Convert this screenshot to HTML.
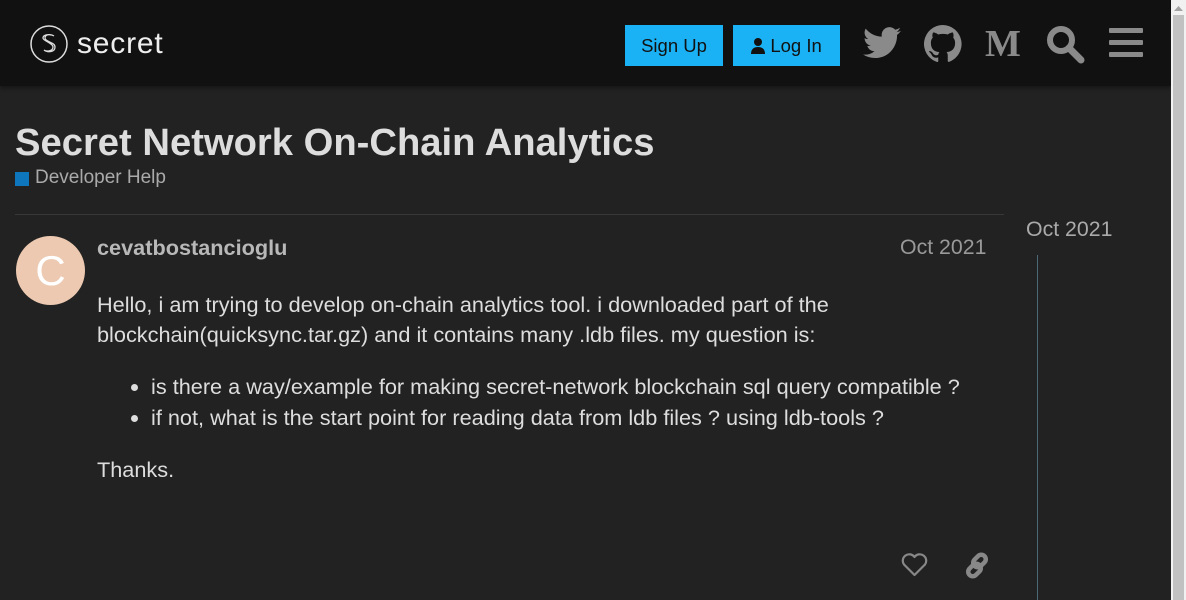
<!DOCTYPE html>
<html><head><style>
*{margin:0;padding:0;box-sizing:border-box}
body{width:1186px;height:600px;overflow:hidden;background:#222;font-family:"Liberation Sans",sans-serif;position:relative}
.hdr{position:absolute;left:0;top:0;width:1171px;height:86px;background:#111;box-shadow:0 2px 4px rgba(0,0,0,.4)}
.abs{position:absolute}
.btn{position:absolute;top:25px;height:41px;background:#1ab2f5;color:#111;font-size:18.5px;line-height:41px;text-align:center}
.ic{position:absolute;fill:#8a8a8a}
.sb{position:absolute;left:1171px;top:0;width:15px;height:600px;background:#f1f1f1}
.th{position:absolute;left:1173px;top:15px;width:11px;height:585px;background:#c1c1c1}
</style></head><body>
<div class="hdr">
<svg class="abs" style="left:29px;top:24px" width="40" height="40" viewBox="0 0 40 40"><circle cx="20" cy="20" r="18" fill="none" stroke="#ddd" stroke-width="1.5"/><path d="M25 12c-3-2-9-2-9 2s10 4 10 9-7 6-11 3M22 11c-3-1-8 0-8 3s10 5 10 9-6 5-9 3" fill="none" stroke="#ddd" stroke-width="1.3"/></svg>
<div class="abs" style="left:77px;top:27px;color:#eee;font-size:30px;letter-spacing:0.8px">secret</div>
<div class="btn" style="left:625px;width:98px">Sign Up</div>
<div class="btn" style="left:733px;width:107px"><svg width="14" height="16" viewBox="0 0 14 16" style="vertical-align:-2px"><circle cx="7" cy="4" r="4" fill="#111"/><path d="M0 16c0-5 3-7 7-7s7 2 7 7z" fill="#111"/></svg> Log In</div>
<svg class="ic" style="left:863px;top:27px" width="38" height="32" viewBox="0 0 24 20"><path d="M24 2.3c-.9.4-1.8.7-2.8.8 1-.6 1.8-1.6 2.2-2.7-1 .6-2 1-3.1 1.2A4.9 4.9 0 0 0 11.9 6 14 14 0 0 1 1.7.9a4.9 4.9 0 0 0 1.5 6.6c-.8 0-1.6-.2-2.2-.6 0 2.4 1.7 4.4 3.9 4.8-.7.2-1.5.2-2.2.1.6 2 2.4 3.4 4.6 3.4A9.9 9.9 0 0 1 0 17.3 14 14 0 0 0 7.5 19.5c9.1 0 14-7.5 14-14v-.6c1-.7 1.8-1.6 2.5-2.6z"/></svg>
<svg class="ic" style="left:924px;top:25px" width="38" height="38" viewBox="0 0 16 16"><path d="M8 0a8 8 0 0 0-2.5 15.6c.4 0 .5-.2.5-.4v-1.5c-2.2.5-2.7-1-2.7-1-.4-.9-.9-1.2-.9-1.2-.7-.5.1-.5.1-.5.8.1 1.2.8 1.2.8.7 1.3 1.9.9 2.3.7.1-.5.3-.9.5-1.1-1.8-.2-3.600-.9-3.600-4 0-.9.3-1.6.8-2.1-.1-.2-.4-1 .1-2.1 0 0 .7-.2 2.2.8a7.600 7.600 0 0 1 4 0c1.5-1 2.2-.8 2.2-.8.4 1.100.2 1.900.1 2.100.5.600.8 1.300.8 2.100 0 3.100-1.900 3.800-3.600 4 .3.300.5.800.5 1.500v2.200c0 .2.100.5.600.4A8 8 0 0 0 8 0z"/></svg>
<div class="abs" style="left:985px;top:22px;color:#8a8a8a;font:bold 38px 'Liberation Serif',serif">M</div>
<svg class="ic" style="left:1045px;top:24px" width="40" height="40" viewBox="0 0 40 40"><circle cx="16" cy="16" r="11" fill="none" stroke="#8a8a8a" stroke-width="6"/><path d="M24 24l12 12" stroke="#8a8a8a" stroke-width="7" stroke-linecap="round"/></svg>
<svg class="ic" style="left:1109px;top:27px" width="34" height="32"><rect y="1" width="34" height="5" rx="1"/><rect y="13" width="34" height="5" rx="1"/><rect y="25" width="34" height="5" rx="1"/></svg>
</div>
<div class="abs" style="left:15px;top:121px;color:#ddd;font-size:38.2px;font-weight:bold">Secret Network On-Chain Analytics</div>
<div class="abs" style="left:15px;top:172px;width:14px;height:14px;background:#0e76bd"></div>
<div class="abs" style="left:35px;top:167px;color:#aaa;font-size:19px">Developer Help</div>
<div class="abs" style="left:15px;top:214px;width:989px;height:1px;background:#383838"></div>
<div class="abs" style="left:16px;top:236px;width:69px;height:69px;border-radius:50%;background:#ecc9b0;color:#fff;font-size:42px;text-align:center;line-height:69px">C</div>
<div class="abs" style="left:97px;top:235px;color:#b8b8b8;font-size:21.7px;font-weight:bold">cevatbostancioglu</div>
<div class="abs" style="left:900px;top:235px;color:#999;font-size:21.3px">Oct 2021</div>
<div class="abs" style="left:97px;top:290px;color:#ddd;font-size:21.7px;line-height:30px;width:890px">Hello, i am trying to develop on-chain analytics tool. i downloaded part of the blockchain(quicksync.tar.gz) and it contains many .ldb files. my question is:</div>
<ul class="abs" style="left:151px;top:371px;color:#ddd;font-size:21.7px;line-height:31px">
<li>is there a way/example for making secret-network blockchain sql query compatible ?</li>
<li>if not, what is the start point for reading data from ldb files ? using ldb-tools ?</li></ul>
<div class="abs" style="left:97px;top:457px;color:#ddd;font-size:21.7px">Thanks.</div>
<svg class="abs" style="left:901px;top:553px" width="27" height="24" viewBox="0 0 27 24"><path d="M13.5 22L3 11.5A5.5 5.5 0 0 1 13.5 4a5.5 5.5 0 0 1 10.5 7.5z" fill="none" stroke="#888" stroke-width="2.2" stroke-linejoin="round"/></svg>
<svg class="abs" style="left:964px;top:552px" width="27" height="27" viewBox="0 0 27 27"><g fill="none" stroke="#888" stroke-width="4.5"><rect x="11" y="2" width="9" height="14" rx="4.5" transform="rotate(45 15.5 9)"/><rect x="6" y="11" width="9" height="14" rx="4.5" transform="rotate(45 10.5 18)"/></g></svg>
<div class="abs" style="left:1026px;top:217px;color:#aaa;font-size:21.3px">Oct 2021</div>
<div class="abs" style="left:1037px;top:255px;width:1px;height:345px;background:#4a6878"></div>
<div class="sb"></div><div class="th"></div>
<svg class="abs" style="left:1173px;top:4px" width="11" height="8"><path d="M1 7l4.5-5 4.5 5z" fill="#a3a3a3"/></svg>
</body></html>
